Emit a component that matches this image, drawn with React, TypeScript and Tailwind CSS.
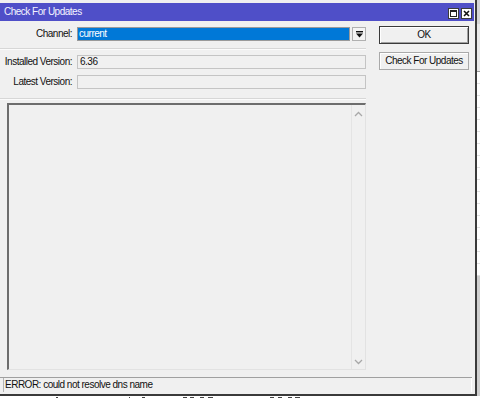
import React from "react";

// MikroTik-style "Check For Updates" dialog

function TitleButton({ kind }: { kind: "restore" | "close" }) {
  return (
    <div className="w-[11px] h-[11px] bg-white border border-[#3c3c3c] flex items-center justify-center">
      {kind === "restore" ? (
        <div className="w-[7px] h-[7px] border border-[#222] border-t-2" />
      ) : (
        <svg width="7" height="7" viewBox="0 0 7 7">
          <path d="M1 1L6 6M6 1L1 6" stroke="#111" strokeWidth="1.6" />
        </svg>
      )}
    </div>
  );
}

function Separator() {
  return <div className="h-[2px] border-t border-[#d7d7d7] border-b border-b-[#fbfbfb]" />;
}

function FieldRow({ label, value, className }: { label: string; value?: string; className?: string }) {
  return (
    <div className={`flex h-[14px] items-center ${className ?? ""}`}>
      <div className="w-[72px] text-right whitespace-nowrap">{label}</div>
      <div className="ml-[5px] w-[289px] h-[14px] border border-[#c4c4c4] bg-[#f0f0f0] pl-[2px] leading-[12px]">
        {value}
      </div>
    </div>
  );
}

function DialogButton({ label, primary }: { label: string; primary?: boolean }) {
  return (
    <div
      className={`h-[18px] w-[90px] flex items-center justify-center bg-[#f0f0f0] ${
        primary
          ? "border border-[#3a3a3a] shadow-[inset_1px_1px_0_#fff,inset_-1px_-1px_0_#a0a0a0]"
          : "border border-[#a9a9a9] shadow-[inset_1px_1px_0_#fff]"
      }`}
    >
      {label}
    </div>
  );
}

function Window() {
  return (
    <div className="w-[477px] h-[396px] shrink-0 border-r-2 border-b-2 border-[#3a3a3a] bg-[#f0f0f0] flex flex-col pt-[3px]">
      {/* title bar */}
      <div className="h-[18px] mr-[1px] bg-[#4f4fc8] flex items-center pl-[4px] pr-[2px] text-[#f4f4ff]">
        <span className="whitespace-nowrap">Check For Updates</span>
        <div className="ml-auto mt-[2px] flex gap-[2px]">
          <TitleButton kind="restore" />
          <TitleButton kind="close" />
        </div>
      </div>

      {/* body */}
      <div className="flex h-[349px]">
        <div className="w-[366px] flex flex-col">
          <div className="mt-[6px] flex h-[14px] items-center">
            <div className="w-[72px] text-right">Channel:</div>
            <div className="ml-[5px] w-[273px] h-[14px] bg-[#0078d7] border border-[#9a9a9a] text-white pl-[1px] leading-[12px]">
              current
            </div>
            <div className="ml-[2px] w-[14px] h-[14px] border border-[#b0b0b0] bg-[#f4f4f4] flex items-center justify-center">
              <svg width="7" height="7" viewBox="0 0 7 7">
                <rect x="0" y="0" width="7" height="1.4" fill="#111" />
                <path d="M0 2.5H7L3.5 6.5Z" fill="#111" />
              </svg>
            </div>
          </div>
          <div className="mt-[7px]">
            <Separator />
          </div>
          <FieldRow className="mt-[5px]" label="Installed Version:" value="6.36" />
          <FieldRow className="mt-[6px]" label="Latest Version:" />
          <div className="mt-[9px]">
            <Separator />
          </div>
          {/* text area */}
          <div className="mt-[3px] ml-[7px] flex-1 flex border-t-2 border-l-2 border-[#6d6d6d] border-r border-b border-r-[#e2e2e2] border-b-[#e2e2e2] bg-[#f0f0f0]">
            <div className="flex-1" />
            <div className="w-[14px] border-l border-[#e4e4e4] flex flex-col items-center justify-between pt-[6px] pb-[4px]">
              <svg width="9" height="6" viewBox="0 0 9 6">
                <path d="M1 5L4.5 1.5L8 5" stroke="#a8a8a8" strokeWidth="1.3" fill="none" />
              </svg>
              <svg width="9" height="6" viewBox="0 0 9 6">
                <path d="M1 1L4.5 4.5L8 1" stroke="#a8a8a8" strokeWidth="1.3" fill="none" />
              </svg>
            </div>
          </div>
        </div>

        <div className="ml-[13px] pt-[5px] flex flex-col gap-[8px]">
          <DialogButton label="OK" primary />
          <DialogButton label="Check For Updates" />
        </div>
      </div>

      {/* status bar */}
      <div className="mt-[7px] mr-[3px] h-[1px] bg-[#a0a0a0]" />
      <div className="ml-[3px] mr-[3px] h-[14px] border-l border-[#b4b4b4] border-r border-r-[#ffffff] pl-[1px] leading-[14px] whitespace-nowrap">
        ERROR: could not resolve dns name
      </div>
    </div>
  );
}

function BackdropStrip() {
  const ticks = Array.from({ length: 17 });
  return (
    <div className="w-[3px] h-[396px] flex flex-col">
      <div className="h-[24px] bg-[#d6d6d6]" />
      <div className="h-[48px] bg-[#e8e8e8] border-b border-[#9a9a9a]" />
      {ticks.map((_, i) => (
        <div key={i} className="h-[12px] border-b border-[#e2e2e2]" />
      ))}
      <div className="flex-1 bg-[#cfcfcf]" />
    </div>
  );
}

function BackdropBottom() {
  const marks = [
    [56, 2],
    [129, 1],
    [142, 3],
    [183, 4],
    [190, 4],
    [200, 4],
    [208, 5],
    [270, 4],
    [278, 4],
    [288, 4],
    [295, 5],
  ];
  return (
    <div className="relative h-[2px]">
      {marks.map(([x, w], i) => (
        <div key={i} className="absolute top-[1px] h-[1px] bg-[#444]" style={{ left: x, width: w }} />
      ))}
    </div>
  );
}

export default function App() {
  return (
    <div className="w-[480px] h-[398px] overflow-hidden bg-white font-['Liberation_Sans',Arial,sans-serif] text-[10px] tracking-[-0.5px] leading-[14px] text-[#111]">
      <div className="flex">
        <Window />
        <BackdropStrip />
      </div>
      <BackdropBottom />
    </div>
  );
}
